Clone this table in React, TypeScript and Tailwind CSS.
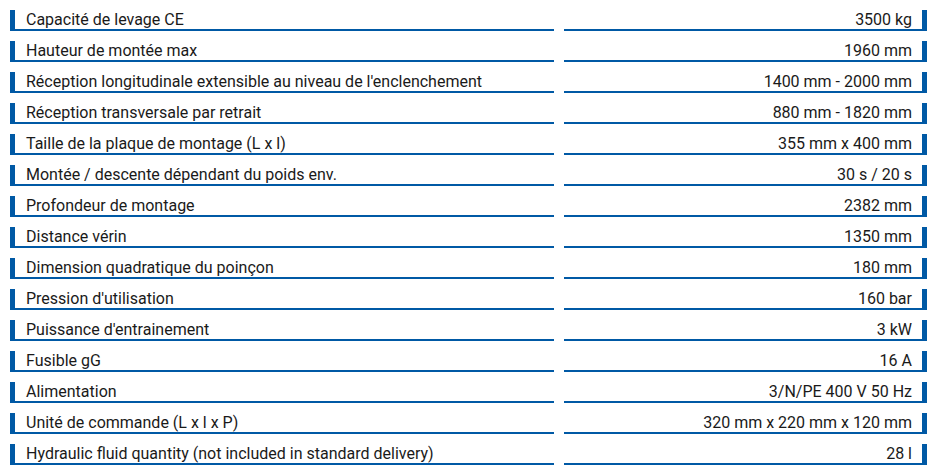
import React from "react";

const rows: [string, string][] = [
  ["Capacité de levage CE", "3500 kg"],
  ["Hauteur de montée max", "1960 mm"],
  ["Réception longitudinale extensible au niveau de l'enclenchement", "1400 mm - 2000 mm"],
  ["Réception transversale par retrait", "880 mm - 1820 mm"],
  ["Taille de la plaque de montage (L x l)", "355 mm x 400 mm"],
  ["Montée / descente dépendant du poids env.", "30 s / 20 s"],
  ["Profondeur de montage", "2382 mm"],
  ["Distance vérin", "1350 mm"],
  ["Dimension quadratique du poinçon", "180 mm"],
  ["Pression d'utilisation", "160 bar"],
  ["Puissance d'entrainement", "3 kW"],
  ["Fusible gG", "16 A"],
  ["Alimentation", "3/N/PE 400 V 50 Hz"],
  ["Unité de commande (L x l x P)", "320 mm x 220 mm x 120 mm"],
  ["Hydraulic fluid quantity (not included in standard delivery)", "28 l"],
];

export default function App() {
  return (
    <div
      className="w-[937px] h-[475px] bg-white pt-[10px] pl-[10px] flex flex-col gap-[10px] text-[#1a1a1a]"
      style={{ fontFamily: "Roboto, 'Liberation Sans', sans-serif" }}
    >
      {rows.map(([k, v]) => (
        <div key={k} className="flex gap-[10px]">
          <div className="w-[544px] h-[21px] border-l-[5px] border-b-2 border-[#0059a5] pl-[11px] text-[16px] leading-[19px] whitespace-nowrap">
            {k}
          </div>
          <div className="w-[363px] h-[21px] border-r-[5px] border-b-2 border-[#0059a5] pr-[10px] text-right text-[16px] leading-[19px] whitespace-nowrap">
            {v}
          </div>
        </div>
      ))}
    </div>
  );
}
